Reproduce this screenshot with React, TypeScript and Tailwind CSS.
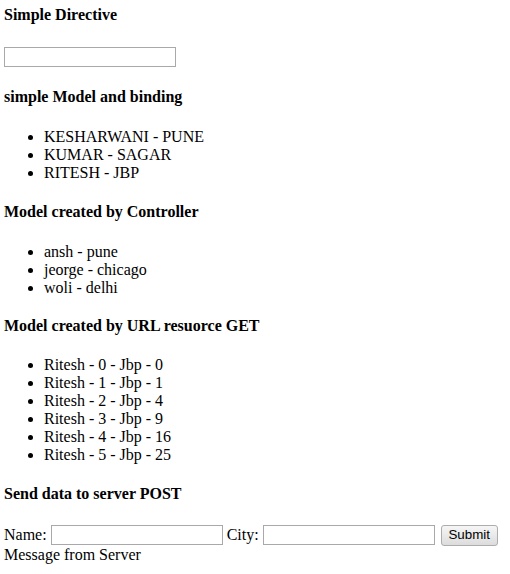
export default function App() {
  const people = [
    "KESHARWANI - PUNE",
    "KUMAR - SAGAR",
    "RITESH - JBP",
  ];
  const cities = ["ansh - pune", "jeorge - chicago", "woli - delhi"];
  const fetched = [0, 1, 2, 3, 4, 5].map((i) => `Ritesh - ${i} - Jbp - ${i * i}`);

  return (
    <div className="min-h-screen bg-white px-[4px] pt-[6px] font-['Liberation_Serif','Times_New_Roman',serif] text-[16px] leading-[18px] text-black">
      <h4 className="mb-[23px] font-bold">Simple Directive</h4>
      <input
        type="text"
        className="block h-[20px] w-[172px] border border-[#a9a9a9] bg-white px-[2px] outline-none"
      />

      <h4 className="mt-[21px] mb-[22px] font-bold">simple Model and binding</h4>
      <ul className="list-disc pl-[40px]">
        {people.map((p) => (
          <li key={p}>{p}</li>
        ))}
      </ul>

      <h4 className="mt-[21px] mb-[22px] font-bold">Model created by Controller</h4>
      <ul className="list-disc pl-[40px]">
        {cities.map((c) => (
          <li key={c}>{c}</li>
        ))}
      </ul>

      <h4 className="mt-[20px] mb-[21px] font-bold">Model created by URL resuorce GET</h4>
      <ul className="list-disc pl-[40px]">
        {fetched.map((f) => (
          <li key={f}>{f}</li>
        ))}
      </ul>

      <h4 className="mt-[21px] mb-[22px] font-bold">Send data to server POST</h4>
      <div className="flex h-[20px] items-center">
        <span>Name:</span>
        <input
          type="text"
          className="ml-[4px] h-[20px] w-[172px] border border-[#a9a9a9] bg-white px-[2px] outline-none"
        />
        <span className="ml-[4px]">City:</span>
        <input
          type="text"
          className="ml-[4px] h-[20px] w-[172px] border border-[#a9a9a9] bg-white px-[2px] outline-none"
        />
        <button className="ml-[6px] h-[21px] w-[57px] rounded-[3px] border border-[#adadad] bg-gradient-to-b from-[#f6f6f6] to-[#dcdcdc] font-['Liberation_Sans',Arial,sans-serif] text-[13.33px] leading-none text-black">
          Submit
        </button>
      </div>
      <div className="mt-[1px]">Message from Server</div>
    </div>
  );
}
